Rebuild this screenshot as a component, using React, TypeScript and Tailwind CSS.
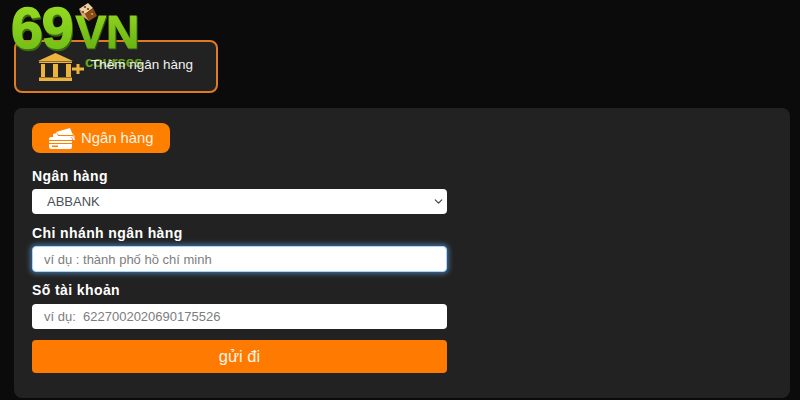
import React from "react";
import { ChevronDown } from "lucide-react";

const Logo = () => (
  <div className="absolute left-[9px] top-0 z-10 w-[142px] font-['Liberation_Sans',sans-serif]">
    <div className="flex items-baseline">
      <span className="bg-gradient-to-b from-[#9ade22] to-[#6cbc14] bg-clip-text pl-[2px] pr-[3px] text-[57px] leading-[57px] font-bold tracking-[-1px] text-transparent drop-shadow-[1px_2px_0_#3c6a10] [-webkit-text-stroke:1.500px_transparent]">
        69
      </span>
      <span className="bg-gradient-to-b from-[#94d820] to-[#62ad12] bg-clip-text pr-[3px] text-[46px] leading-[46px] font-bold text-transparent drop-shadow-[1px_1px_0_#2f5510] [-webkit-text-stroke:1px_transparent]">
        VN
      </span>
    </div>
    <svg className="absolute left-[70px] top-[3px]" width="18" height="18" viewBox="0 0 18 18">
      <path d="M0 6 L9 0 L14 5 L6 11 Z" fill="#eccfa0" />
      <path d="M6 11 L14 5 L18 13 L10 18 Z" fill="#8a4a14" />
      <path d="M0 6 L6 11 L10 18 L3 13 Z" fill="#d9a766" />
      <circle cx="6" cy="4" r="1.100" fill="#6b3a12" />
      <circle cx="9" cy="6" r="1.100" fill="#6b3a12" />
      <circle cx="4" cy="9" r="1" fill="#6b3a12" />
      <circle cx="13" cy="11" r="1" fill="#e8a040" />
    </svg>
    <span className="absolute left-[76px] top-[54px] text-[15px] leading-[15px] font-bold text-[#6aa51a]">
      courses
    </span>
  </div>
);

const BankIcon = () => (
  <svg width="47" height="28" viewBox="0 0 47 28" fill="#edb33c">
    <path d="M17.500 0 L35 8 L0 8 Z" />
    <rect x="1" y="8.500" width="33" height="1.500" />
    <rect x="3" y="11" width="4" height="13" />
    <rect x="15" y="11" width="5" height="13" />
    <rect x="28" y="11" width="5" height="13" />
    <rect x="1" y="24.500" width="33" height="3.500" />
    <rect x="34" y="14.500" width="12" height="3" />
    <rect x="38.500" y="11" width="3" height="10" />
  </svg>
);

const CardsIcon = () => (
  <svg width="26" height="21" viewBox="0 0 26 21" fill="#fff">
    <path d="M7 4 L21 0 L24 7 L10 7 Z" />
    <path d="M4 6 L8 5 L9 8 L23 8 L26 9 L24 5 L26 12 L24 12 L23 9 L4 9 Z" />
    <path d="M2 9 H21 Q23 9 23 11 V12 H0 V11 Q0 9 2 9 Z" />
    <rect x="0" y="13" width="23" height="2" />
    <path d="M0 16 H23 V18.500 Q23 21 21 21 H2 Q0 21 0 18.500 Z" />
    <rect x="3" y="17.500" width="6" height="1.500" fill="#ff7f00" />
  </svg>
);

export default function App() {
  return (
    <div className="relative h-[400px] w-[800px] overflow-hidden bg-[#0b0b0b] px-[14px] pt-[40px] font-['Liberation_Sans',sans-serif]">
      <Logo />

      <div className="flex h-[53px] w-[204px] items-center rounded-[8px] border-2 border-[#e07b22] bg-[#222222] pl-[22px]">
        <BankIcon />
        <span className="relative z-20 mb-[2px] ml-[6px] text-[13.500px] text-[#f0f0f0]">Thêm ngân hàng</span>
      </div>

      <div className="mt-[15px] h-[290px] w-[776px] rounded-[8px] bg-[#222222] px-[18px] pt-[15px]">
        <div className="flex h-[30px] w-[138px] items-center gap-[6px] rounded-[8px] bg-[#ff7f00] pl-[17px] text-[14.800px] text-[#fff3e6]">
          <CardsIcon />
          <span>Ngân hàng</span>
        </div>

        <div className="w-[415px]">
          <label className="mt-[15px] block text-[14px] leading-[16px] font-bold tracking-[0.4px] text-white">
            Ngân hàng
          </label>
          <div className="relative mt-[5px]">
            <select className="block h-[25px] w-full appearance-none rounded-[4px] bg-white pl-[15px] text-[13px] text-[#495057] outline-none">
              <option>ABBANK</option>
            </select>
            <ChevronDown className="pointer-events-none absolute right-[2px] top-[6px] size-[13px] text-[#444444]" strokeWidth={2.2} />
          </div>

          <label className="mt-[11px] block text-[14px] leading-[16px] font-bold tracking-[0.4px] text-white">
            Chi nhánh ngân hàng
          </label>
          <input
            className="mt-[5px] block h-[26px] w-full rounded-[4px] border border-[#a8d4ff] bg-white px-[11px] text-[13px] shadow-[0_0_5px_2px_rgba(90,165,235,0.55)] outline-none placeholder:text-[#7d7d7d]"
            placeholder="ví dụ : thành phố hồ chí minh"
          />

          <label className="mt-[10px] block text-[14px] leading-[16px] font-bold tracking-[0.4px] text-white">
            Số tài khoản
          </label>
          <input
            className="mt-[6px] block h-[25px] w-full rounded-[4px] bg-white px-[12px] text-[13px] outline-none placeholder:text-[#7d7d7d]"
            placeholder="ví dụ:  6227002020690175526"
          />

          <div className="mt-[11px] flex h-[33px] items-center justify-center rounded-[4px] bg-[#ff7a00] text-[16.500px] text-[#fff3e6]">
            gửi đi
          </div>
        </div>
      </div>
    </div>
  );
}
